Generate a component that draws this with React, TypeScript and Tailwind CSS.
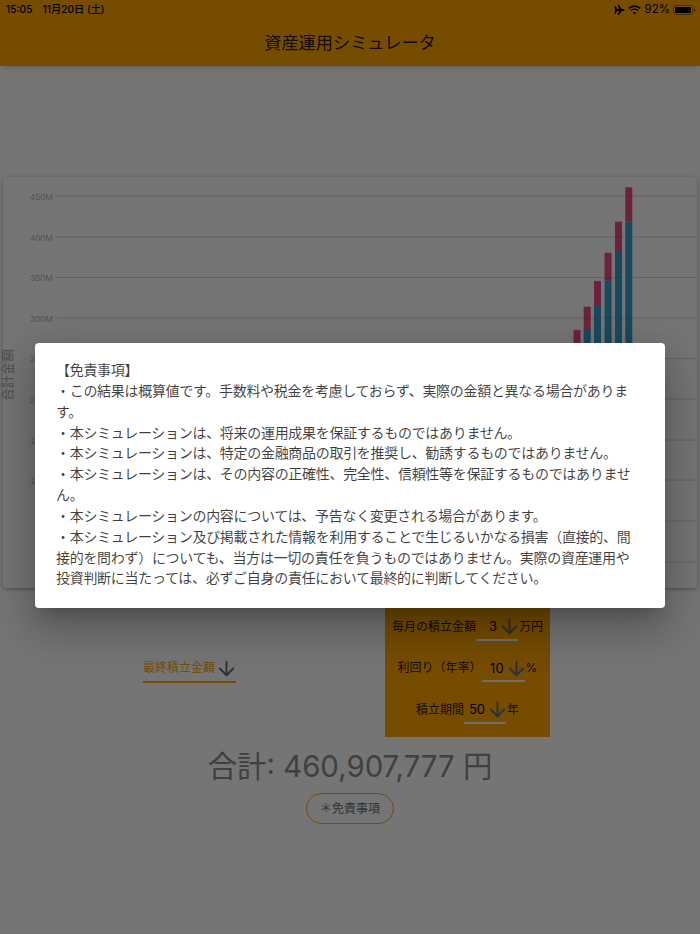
import { ArrowDown } from 'lucide-react';

const gridLines = [
  { label: '450M', y: 19 },
  { label: '400M', y: 60 },
  { label: '350M', y: 100.5 },
  { label: '300M', y: 141 },
  { label: '250M', y: 181.6 },
  { label: '200M', y: 222 },
  { label: '150M', y: 263 },
  { label: '100M', y: 303 },
  { label: '50M', y: 344 },
  { label: '0', y: 385 },
];

// x, top of the red part, top of the blue part (chart coordinates)
const bars = [
  { x: 622.3, top: 10.3, mid: 44.7 },
  { x: 612, top: 44.7, mid: 75 },
  { x: 601.6, top: 75.7, mid: 103.7 },
  { x: 591, top: 104, mid: 129 },
  { x: 580.7, top: 129.7, mid: 153 },
  { x: 570.5, top: 153, mid: 176 },
];

const disclaimer = [
  '【免責事項】',
  '・この結果は概算値です。手数料や税金を考慮しておらず、実際の金額と異なる場合があります。',
  '・本シミュレーションは、将来の運用成果を保証するものではありません。',
  '・本シミュレーションは、特定の金融商品の取引を推奨し、勧誘するものではありません。',
  '・本シミュレーションは、その内容の正確性、完全性、信頼性等を保証するものではありません。',
  '・本シミュレーションの内容については、予告なく変更される場合があります。',
  '・本シミュレーション及び掲載された情報を利用することで生じるいかなる損害（直接的、間接的を問わず）についても、当方は一切の責任を負うものではありません。実際の資産運用や投資判断に当たっては、必ずご自身の責任において最終的に判断してください。',
];

const StatusIcons = () => (
  <div className="flex items-center">
    <svg width="11" height="10" viewBox="0 0 11 10" className="mr-[3px]">
      <path d="M0.5 1 L1.6 1 L3 3.9 L5 3.9 L3.7 0 L5 0 L7.6 3.9 L9.6 3.9 C10.9 3.9 10.9 6.1 9.6 6.1 L7.6 6.1 L5 10 L3.7 10 L5 6.1 L3 6.1 L1.6 9 L0.5 9 L1.2 5 Z" fill="#000" />
    </svg>
    <svg width="13" height="10" viewBox="0 0 13 10" className="mr-[4px]" fill="none" stroke="#000">
      <path d="M0.8 3.4 C4 0.4 9 0.4 12.2 3.4" strokeWidth="1.5" />
      <path d="M2.9 5.5 C4.9 3.7 8.1 3.7 10.1 5.5" strokeWidth="1.5" />
      <path d="M6.5 9.6 L4.7 7.5 C5.7 6.7 7.3 6.7 8.3 7.5 Z" fill="#000" stroke="none" />
    </svg>
    <span className="text-[11.5px] leading-none mr-[3px]">92%</span>
    <svg width="23" height="10" viewBox="0 0 23 10">
      <rect x="0.5" y="0.5" width="19.5" height="9" rx="2.5" fill="none" stroke="#000" strokeOpacity="0.35" />
      <rect x="2" y="2" width="16" height="6" rx="1" fill="#000" />
      <path d="M21 3.5 C22 3.7 22.4 4.3 22.4 5 C22.4 5.7 22 6.3 21 6.5 Z" fill="#000" fillOpacity="0.4" />
    </svg>
  </div>
);

const Picker = ({ label, value, unit, width }: { label: string; value: string; unit: string; width: string }) => (
  <div className="flex items-center justify-center h-[41.5px] text-[12px] text-black/87">
    <span>{label}</span>
    <div className={`flex items-center justify-end h-[28px] pt-[2px] border-b-2 border-[#f2f2f6] pr-[1px] ${width}`}>
      <span className="text-[13px] text-black">{value}</span>
      <ArrowDown size={23} strokeWidth={2} className="text-[#5f6b7e] -mx-[4px] ml-[1px]" />
    </div>
    <span className="ml-[1px]">{unit}</span>
  </div>
);

export default function App() {
  return (
    <div className="relative h-[934px] w-[700px] overflow-hidden bg-white font-[Inter,'Noto_Sans_CJK_JP',sans-serif]">
      <header className="h-[66px] bg-[#ffa500] shadow-md">
        <div className="flex items-center justify-between h-[19px] pl-[6px] pr-[4px] text-[10.2px] text-black">
          <div className="flex gap-[10px] font-medium">
            <span>15:05</span>
            <span>11月20日 (土)</span>
          </div>
          <StatusIcons />
        </div>
        <h1 className="text-center text-[17.2px] leading-[47px] text-black/87">資産運用シミュレータ</h1>
      </header>

      <section className="mx-[3px] mt-[111px] h-[411px] rounded bg-white shadow-[0_1px_4px_rgba(0,0,0,0.35)]">
        <svg width="694" height="411" viewBox="0 0 694 411" className="overflow-visible">
          {gridLines.map((g) => (
            <g key={g.label}>
              <line x1="52" x2="694" y1={g.y} y2={g.y} stroke="#d6d6d6" />
              <text x="50" y={g.y + 3.5} textAnchor="end" fontSize="9.2" fontFamily="'Liberation Sans', sans-serif" fill="#b8b8b8">{g.label}</text>
            </g>
          ))}
          {bars.map((b) => (
            <g key={b.x}>
              <rect x={b.x} y={b.top} width="7" height={b.mid - b.top} fill="#e91e63" opacity="0.8" />
              <rect x={b.x} y={b.mid} width="7" height={385 - b.mid} fill="#2196c8" opacity="0.9" />
            </g>
          ))}
          <text transform="translate(9 198) rotate(-90)" textAnchor="middle" fontSize="13" fill="#aaa">合計金額</text>
        </svg>
      </section>

      <section className="flex items-center mt-[10px] pl-[143px]">
        <div className="w-[93px] h-[30px] pt-[3px] flex items-center border-b-2 border-[#ffa500]">
          <span className="text-[12px] text-[#ffa500]">最終積立金額</span>
          <ArrowDown size={23} strokeWidth={2} className="text-[#5f6b7e] -mx-[4px] ml-[0px]" />
        </div>
        <div className="ml-[149px] w-[165px] h-[139px] bg-[#ffa500] pt-[8px]">
          <Picker label="毎月の積立金額" value="3" unit="万円" width="w-[42px]" />
          <Picker label="利回り（年率）" value="10" unit="%" width="w-[43px]" />
          <Picker label="積立期間" value="50" unit="年" width="w-[42px]" />
        </div>
      </section>

      <p className="mt-[7px] text-center text-[29.4px] leading-[46px] text-[#8c8c8c]">合計: 460,907,777 円</p>
      <div className="flex justify-center mt-[3px]">
        <button className="h-[31px] w-[88px] rounded-full border border-[#ffa500] text-[12px] text-[#6e6e6e]">＊免責事項</button>
      </div>

      <div className="absolute inset-0 flex justify-center items-start pt-[343px] bg-black/54">
        <div className="w-[630px] h-[265px] rounded bg-white pl-[21px] pr-[24px] pt-[17px] shadow-[0_11px_15px_-7px_rgba(0,0,0,0.2),0_24px_38px_3px_rgba(0,0,0,0.14),0_9px_46px_8px_rgba(0,0,0,0.12)]">
          {disclaimer.map((line) => (
            <p key={line} className="text-[14px] leading-[20.85px] text-black/75 tracking-[-0.3px]">{line}</p>
          ))}
        </div>
      </div>
    </div>
  );
}
